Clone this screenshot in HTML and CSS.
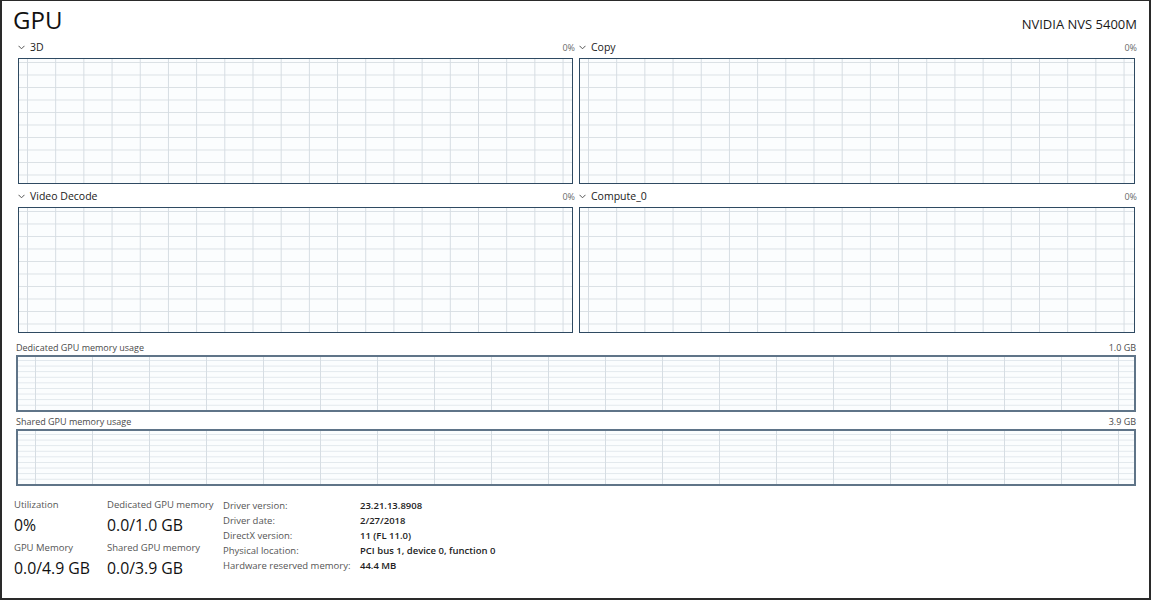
FILE: index.html
```html
<!DOCTYPE html>
<html lang="en">
<head>
<meta charset="utf-8">
<title>GPU</title>
<link rel="stylesheet" href="styles.css">
</head>
<body>
<div class="window">
  <header class="header">
    <h1 class="title">GPU</h1>
    <div class="device">NVIDIA NVS 5400M</div>
  </header>

  <section class="engines">
    <div class="engine">
      <div class="engine-head">
        <span class="engine-name"><svg class="chev" width="7" height="5" viewBox="0 0 7 5"><polyline points="0.5,0.8 3.5,3.8 6.5,0.8" fill="none" stroke="#555" stroke-width="1"/></svg>3D</span>
        <span class="pct">0%</span>
      </div>
      <div class="chart"></div>
    </div>
    <div class="engine">
      <div class="engine-head">
        <span class="engine-name"><svg class="chev" width="7" height="5" viewBox="0 0 7 5"><polyline points="0.5,0.8 3.5,3.8 6.5,0.8" fill="none" stroke="#555" stroke-width="1"/></svg>Copy</span>
        <span class="pct">0%</span>
      </div>
      <div class="chart"></div>
    </div>
    <div class="engine">
      <div class="engine-head">
        <span class="engine-name"><svg class="chev" width="7" height="5" viewBox="0 0 7 5"><polyline points="0.5,0.8 3.5,3.8 6.5,0.8" fill="none" stroke="#555" stroke-width="1"/></svg>Video Decode</span>
        <span class="pct">0%</span>
      </div>
      <div class="chart"></div>
    </div>
    <div class="engine">
      <div class="engine-head">
        <span class="engine-name"><svg class="chev" width="7" height="5" viewBox="0 0 7 5"><polyline points="0.5,0.8 3.5,3.8 6.5,0.8" fill="none" stroke="#555" stroke-width="1"/></svg>Compute_0</span>
        <span class="pct">0%</span>
      </div>
      <div class="chart"></div>
    </div>
  </section>

  <section class="memory first">
    <div class="mem-head"><span>Dedicated GPU memory usage</span><span>1.0 GB</span></div>
    <div class="mem-chart"></div>
  </section>
  <section class="memory">
    <div class="mem-head"><span>Shared GPU memory usage</span><span>3.9 GB</span></div>
    <div class="mem-chart"></div>
  </section>

  <section class="stats">
    <div class="stat-col col-a">
      <div class="stat-label">Utilization</div>
      <div class="stat-value">0%</div>
      <div class="stat-label second">GPU Memory</div>
      <div class="stat-value">0.0/4.9 GB</div>
    </div>
    <div class="stat-col col-b">
      <div class="stat-label">Dedicated GPU memory</div>
      <div class="stat-value">0.0/1.0 GB</div>
      <div class="stat-label second">Shared GPU memory</div>
      <div class="stat-value">0.0/3.9 GB</div>
    </div>
    <dl class="details">
      <dt>Driver version:</dt><dd>23.21.13.8908</dd>
      <dt>Driver date:</dt><dd>2/27/2018</dd>
      <dt>DirectX version:</dt><dd>11 (FL 11.0)</dd>
      <dt>Physical location:</dt><dd>PCI bus 1, device 0, function 0</dd>
      <dt>Hardware reserved memory:</dt><dd>44.4 MB</dd>
    </dl>
  </section>
</div>
</body>
</html>
```

FILE: styles.css
```css
html, body {
  margin: 0;
  padding: 0;
  background: #fff;
}

body {
  font-family: "Open Sans", "Noto Sans", sans-serif;
  color: #1b1b1b;
}

.window {
  width: 1151px;
  height: 600px;
  box-sizing: border-box;
  border: 2px solid #2a2a2a;
  border-top-width: 1px;
  background: #fff;
  overflow: hidden;
}

/* header */
.header {
  display: flex;
  justify-content: space-between;
  align-items: baseline;
  padding: 3px 12px 0 11px;
  margin-bottom: 4px;
}

.title {
  margin: 0;
  font-size: 24px;
  font-weight: 400;
  line-height: 32px;
  color: #111;
}

.device {
  font-size: 13px;
  color: #1a1a1a;
}

/* engine charts */
.engines {
  display: grid;
  grid-template-columns: 555px 556px;
  column-gap: 6px;
  row-gap: 5px;
  margin-left: 16px;
}

.engine-head {
  display: flex;
  justify-content: space-between;
  align-items: center;
  height: 14px;
  margin-bottom: 4px;
  margin-right: -2px;
}

.engine-name {
  display: flex;
  align-items: center;
  font-size: 10.5px;
  color: #1a1a1a;
}

.chev {
  margin: 0 5px 0 0;
}

.pct {
  font-size: 9px;
  color: #6a6a6a;
}

.chart {
  height: 126px;
  box-sizing: border-box;
  border: 1px solid #2f4a62;
  background-color: #fbfdfe;
  background-image:
    linear-gradient(to right, #d5dce2 1px, transparent 1px),
    linear-gradient(to bottom, #dae0e5 1px, transparent 1px);
  background-size: 28.2px 100%, 100% 12.5px;
  background-position: 8px 0, 0 3px;
}

/* memory charts */
.memory {
  margin: 3px 13px 0 14px;
}

.memory.first {
  margin-top: 8px;
}

.mem-head {
  display: flex;
  justify-content: space-between;
  font-size: 9px;
  line-height: 13px;
  color: #4a4a4a;
  margin-bottom: 1px;
}

.mem-chart {
  height: 57px;
  box-sizing: border-box;
  border: 2px solid #5f7488;
  background-color: #fbfdfe;
  background-image:
    linear-gradient(to right, #d6dde3 1px, transparent 1px),
    linear-gradient(to bottom, #e1e7ec 1px, transparent 1px);
  background-size: 57px 100%, 100% 5.6px;
  background-position: 17px 0, 0 3px;
}

/* stats */
.stats {
  display: grid;
  grid-template-columns: 93px 116px auto;
  align-items: start;
  margin: 12px 0 0 12px;
}

.stat-label {
  font-size: 9.5px;
  line-height: 14px;
  color: #555;
}

.stat-label.second {
  margin-top: 3px;
}

.stat-value {
  font-size: 15.8px;
  line-height: 26px;
  color: #111;
}

.details {
  display: grid;
  grid-template-columns: 137px auto;
  align-content: start;
  margin: 0;
  font-size: 9.5px;
  line-height: 15px;
}

.details dt {
  color: #555;
}

.details dd {
  margin: 0;
  font-weight: 600;
  color: #222;
}
```
